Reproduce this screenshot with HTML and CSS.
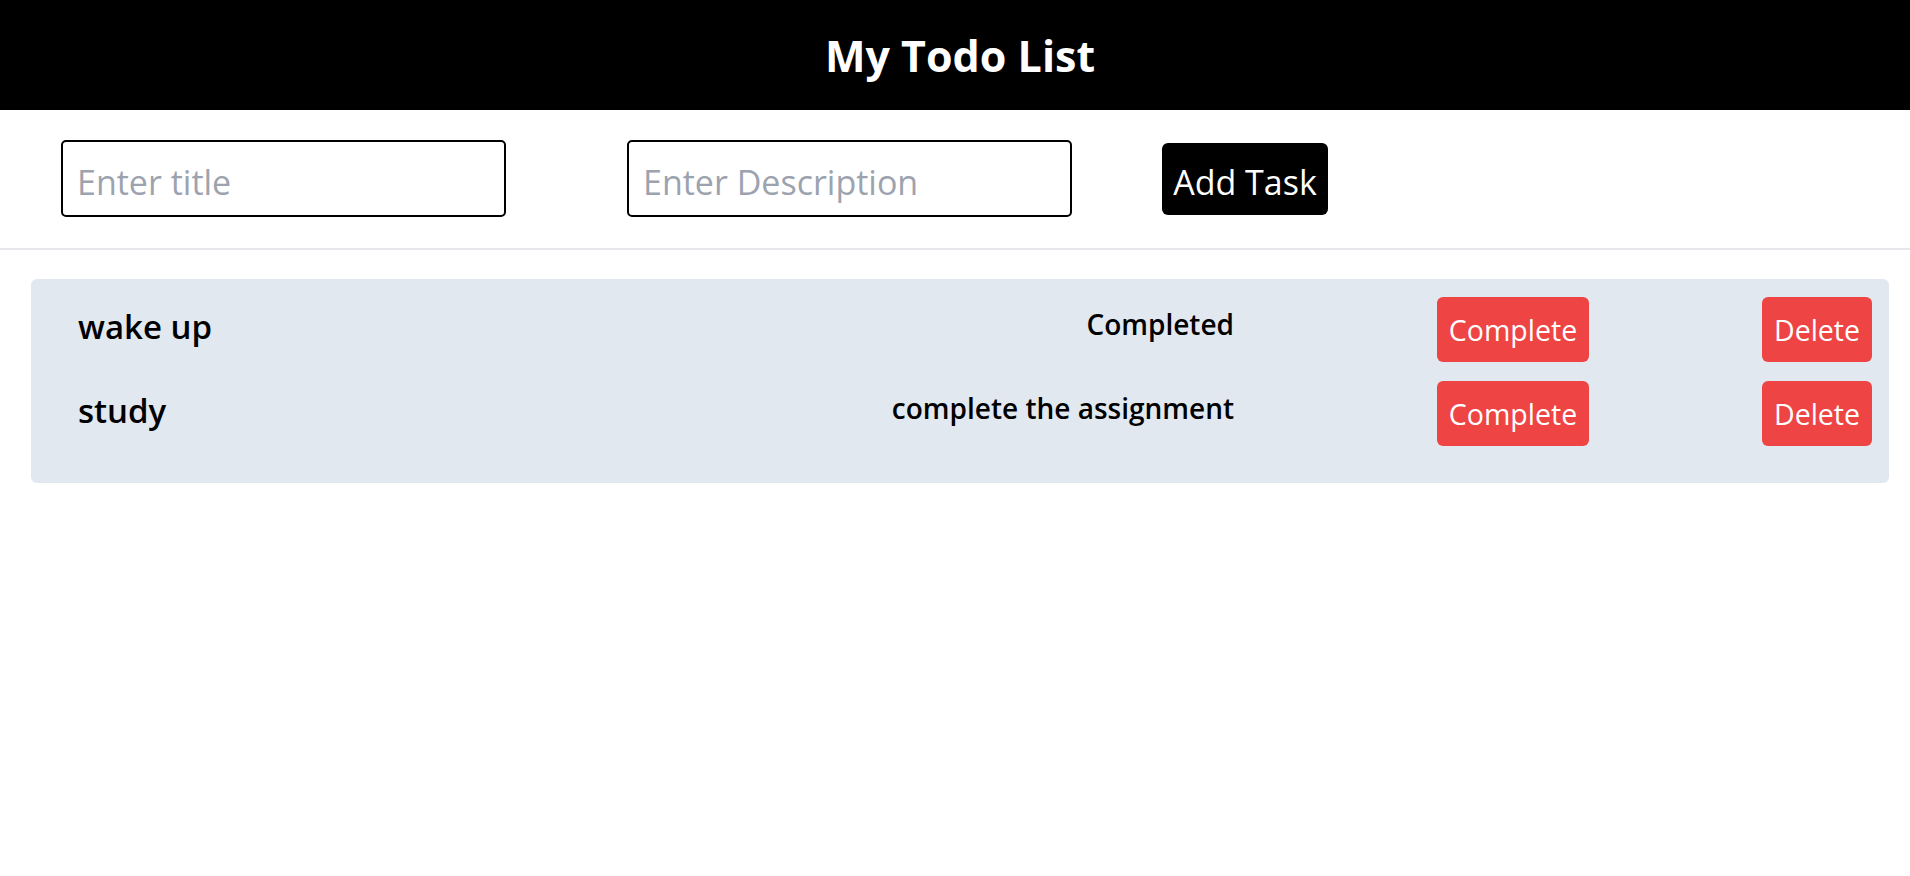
FILE: index.html
```html
<!DOCTYPE html>
<html lang="en">
<head>
<meta charset="utf-8">
<title>My Todo List</title>
<link rel="stylesheet" href="styles.css">
</head>
<body>
  <header class="topbar">
    <h1 class="topbar-title">My Todo List</h1>
  </header>
  <form class="task-form">
    <input class="field field-title" type="text" placeholder="Enter title">
    <input class="field field-desc" type="text" placeholder="Enter Description">
    <button class="add-btn" type="button">Add Task</button>
  </form>
  <section class="task-list">
    <div class="task-row">
      <h3 class="task-title">wake up</h3>
      <p class="task-desc">Completed</p>
      <button class="btn btn-complete" type="button">Complete</button>
      <button class="btn btn-delete" type="button">Delete</button>
    </div>
    <div class="task-row">
      <h3 class="task-title">study</h3>
      <p class="task-desc">complete the assignment</p>
      <button class="btn btn-complete" type="button">Complete</button>
      <button class="btn btn-delete" type="button">Delete</button>
    </div>
  </section>
</body>
</html>
```

FILE: styles.css
```css
* { box-sizing: border-box; }
html, body { margin: 0; padding: 0; background: #fff; }
body {
  font-family: "Open Sans", "Noto Sans", "Liberation Sans", sans-serif;
  color: #000;
}
.topbar {
  height: 110px;
  background: #000;
  display: flex;
  align-items: center;
  justify-content: center;
  padding-left: 10px;
}
.topbar-title {
  margin: 0;
  color: #fff;
  font-size: 43px;
  font-weight: 700;
  line-height: 1;
}
.task-form {
  display: flex;
  align-items: flex-start;
  padding: 30px 0 0 61px;
  border-bottom: 2px solid #e5e7eb;
  height: 140px;
}
.field {
  width: 445px;
  height: 77px;
  border: 2px solid #000;
  border-radius: 5px;
  padding: 6px 14px 0;
  font-family: inherit;
  font-size: 34px;
  color: #111;
  outline: none;
  background: #fff;
}
.field::placeholder { color: #9ca3af; }
.field-desc { margin-left: 121px; }
.add-btn {
  margin: 3px 0 0 90px;
  height: 72px;
  width: 166px;
  padding: 6px 0 0;
  background: #000;
  color: #fff;
  border: none;
  border-radius: 6px;
  font-family: inherit;
  font-size: 34px;
}
.task-list {
  margin: 29px 21px 0 31px;
  background: #e2e8f0;
  border-radius: 6px;
  padding: 18px 17px 18px 47px;
}
.task-row {
  display: flex;
  align-items: center;
  margin-bottom: 19px;
}
.task-title {
  flex: 1;
  margin: 0;
  padding-bottom: 6px;
  font-size: 33px;
  font-weight: 600;
}
.task-desc {
  margin: 0;
  padding-bottom: 12px;
  font-size: 28px;
  font-weight: 600;
  text-align: right;
}
.btn {
  height: 65px;
  border: none;
  border-radius: 6px;
  background: #ef4444;
  color: #fff;
  font-family: inherit;
  font-size: 28.5px;
  padding: 0;
}
.btn-complete { margin-left: 203px; width: 152px; }
.btn-delete { margin-left: 173px; width: 110px; }
```
